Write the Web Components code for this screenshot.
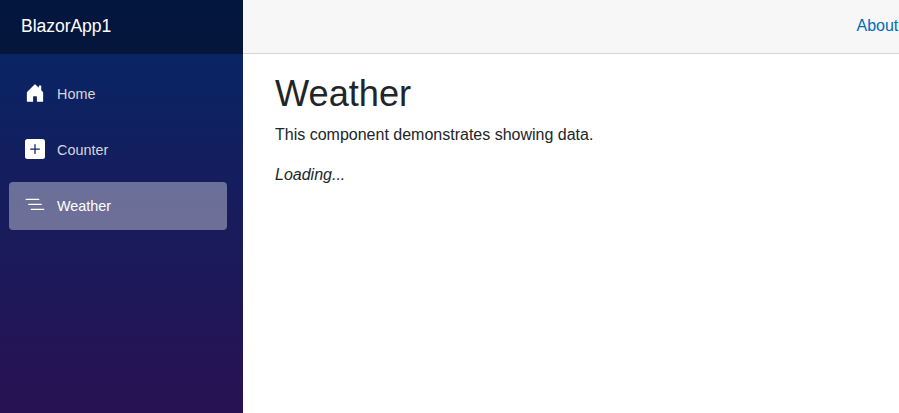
<!DOCTYPE html>
<html lang="en"><head><meta charset="utf-8"><title>Weather</title>
<style>html,body{margin:0;height:100%;overflow:hidden}body{font-family:"Liberation Sans",Arial,sans-serif;font-size:16px;line-height:24px;color:#212529;background:#fff}</style></head>
<body><app-layout><nav-menu slot="nav" brand="BlazorApp1"><nav-item icon="home">Home</nav-item><nav-item icon="plus">Counter</nav-item><nav-item icon="list" active>Weather</nav-item></nav-menu><top-row slot="top">About</top-row><weather-page heading="Weather">This component demonstrates showing data.</weather-page></app-layout>
<script>
const define=(name,html,init)=>customElements.define(name,class extends HTMLElement{
  connectedCallback(){if(this.shadowRoot)return;this.attachShadow({mode:'open'}).innerHTML=html;if(init)init(this,this.shadowRoot);}
});
const icons={
  home:'<path d="M6.5 14.5v-3.505c0-.245.25-.495.5-.495h2c.25 0 .5.25.5.5v3.5a.5.5 0 0 0 .5.5h4a.5.5 0 0 0 .5-.5v-7a.5.5 0 0 0-.146-.354L13 5.793V2.5a.5.5 0 0 0-.5-.5h-1a.5.5 0 0 0-.5.5v1.293L8.354 1.146a.5.5 0 0 0-.708 0l-6 6A.5.5 0 0 0 1.5 7.5v7a.5.5 0 0 0 .5.5h4a.5.5 0 0 0 .5-.5Z"/>',
  plus:'<path d="M2 0a2 2 0 0 0-2 2v12a2 2 0 0 0 2 2h12a2 2 0 0 0 2-2V2a2 2 0 0 0-2-2H2zm6.5 4.5v3h3a.5.5 0 0 1 0 1h-3v3a.5.5 0 0 1-1 0v-3h-3a.5.5 0 0 1 0-1h3v-3a.5.5 0 0 1 1 0z"/>',
  list:'<path fill-rule="evenodd" d="M4.5 11.5A.5.5 0 0 1 5 11h10a.5.5 0 0 1 0 1H5a.5.5 0 0 1-.5-.5zm-2-4A.5.5 0 0 1 3 7h10a.5.5 0 0 1 0 1H3a.5.5 0 0 1-.5-.5zm-2-4A.5.5 0 0 1 1 3h10a.5.5 0 0 1 0 1H1a.5.5 0 0 1-.5-.5z"/>'
};
define('nav-item',`<style>:host{display:block;height:48px;margin:0 16px 8px 9px}a{display:flex;align-items:center;height:48px;padding:0 16px;box-sizing:border-box;border-radius:4px;color:#d7d7d7;font-size:14.4px;line-height:48px}:host([active]) a{background:rgba(255,255,255,.37);color:#fff}svg{width:20px;height:20px;margin:0 12px 2px 0;fill:#fff}</style><a><svg viewBox="0 0 16 16"></svg><span><slot></slot></span></a>`,(h,r)=>{r.querySelector('svg').innerHTML=icons[h.getAttribute('icon')]});
define('nav-menu',`<style>:host{display:block;height:100%;background:linear-gradient(180deg,#052767 0%,#3a0647 70%) 0 0/100% 893px no-repeat}header{height:54px;padding-left:21px;box-sizing:border-box;background:rgba(0,0,0,.4);color:#fff;font-size:17.6px;letter-spacing:-.07px;line-height:52px}nav{padding-top:16px}</style><header></header><nav><slot></slot></nav>`,(h,r)=>{r.querySelector('header').textContent=h.getAttribute('brand')});
define('top-row',`<style>:host{display:flex;justify-content:flex-end;align-items:center;height:54px;box-sizing:border-box;background:#f7f7f7;border-bottom:1px solid #d6d5d5}a{color:#006bb7;line-height:24px;margin:0 .7px 2px 0}</style><a><slot></slot></a>`);
define('weather-page',`<style>:host{display:block;padding:18px 32px}h1{font-weight:400;font-size:36.2px;line-height:43px;margin:0 0 8px}p{margin:0 0 16px}</style><h1></h1><p><slot></slot></p><p><em>Loading...</em></p>`,(h,r)=>{r.querySelector('h1').textContent=h.getAttribute('heading')});
define('app-layout',`<style>:host{display:grid;grid-template-columns:243px 1fr;height:100vh}</style><slot name="nav"></slot><main><slot name="top"></slot><slot></slot></main>`);
</script></body></html>
